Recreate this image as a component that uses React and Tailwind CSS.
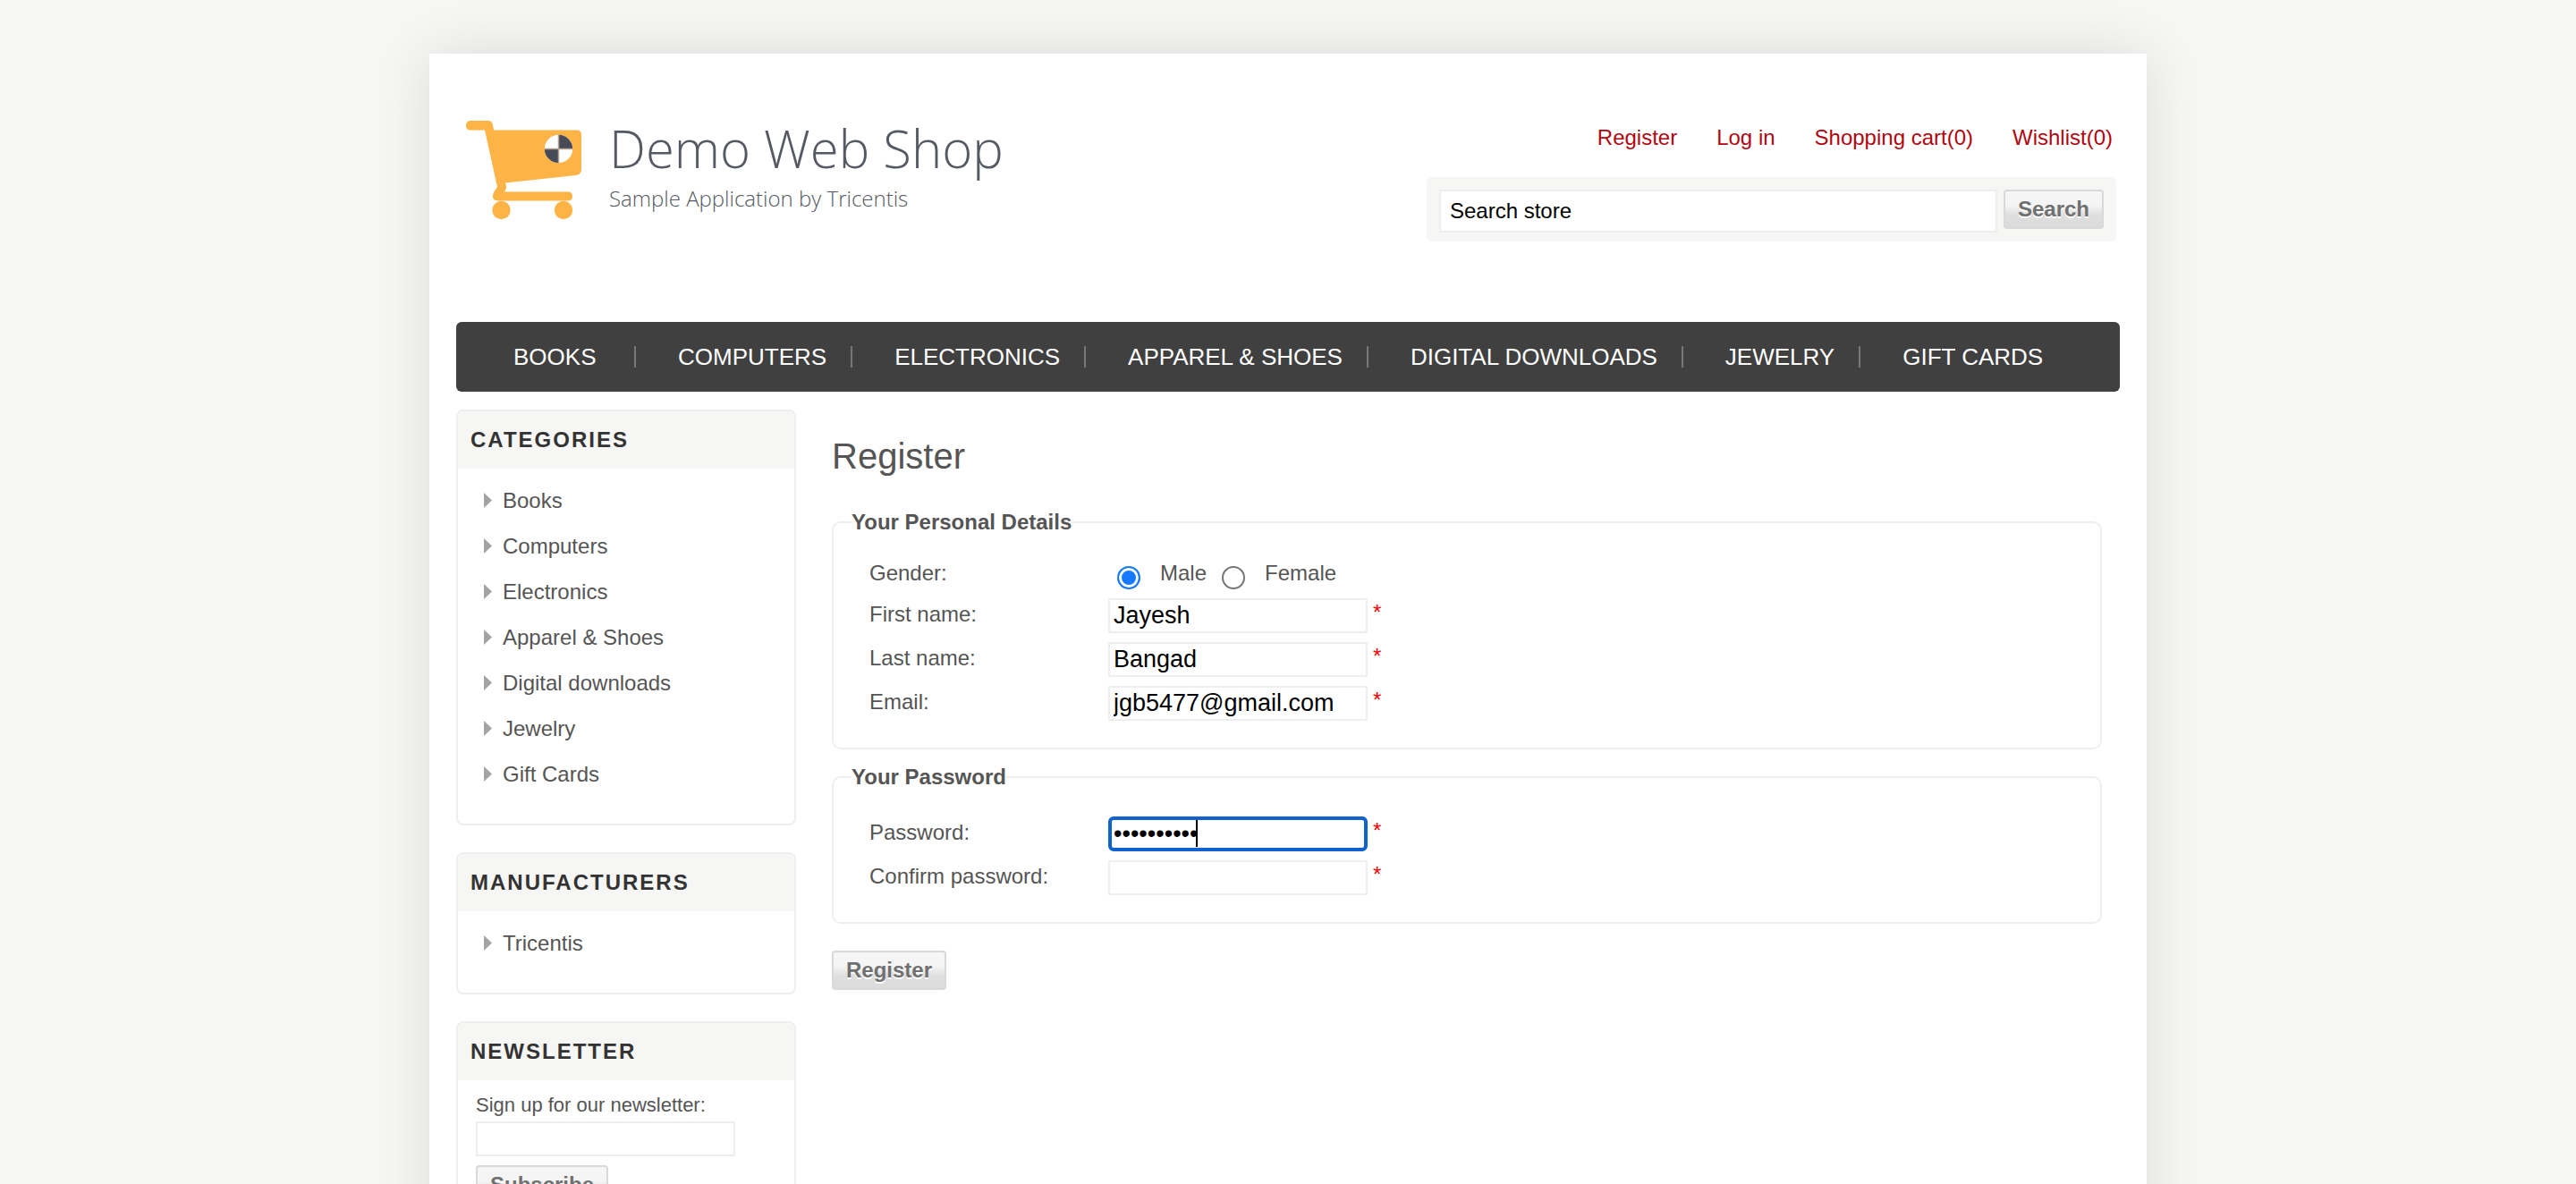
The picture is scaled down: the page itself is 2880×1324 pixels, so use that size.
import React from "react";

const headerLinks = ["Register", "Log in", "Shopping cart(0)", "Wishlist(0)"];

const menu = [
  "Books",
  "Computers",
  "Electronics",
  "Apparel & Shoes",
  "Digital downloads",
  "Jewelry",
  "Gift Cards",
];

const buttonClass =
  "h-11 shrink-0 rounded-[4px] border-2 border-[#d9d9d9] bg-[linear-gradient(#f6f6f6_0%,#f4f4f4_40%,#dedede_66%,#dcdcdc_100%)] px-3.5 text-2xl leading-8 font-bold text-[#707070] [text-shadow:0_2px_0_#fff]";

const fieldClass =
  "h-[39px] w-[290px] border-2 border-[#eee] bg-white px-1 pb-px text-[27px] leading-8 text-black outline-none";

function Logo() {
  return (
    <a href="#home" className="flex items-start pt-[75px] pl-[11px]">
      <svg viewBox="0 0 130 111" className="h-[111px] w-[130px] shrink-0" aria-hidden="true">
        <g fill="#fcb447">
          <path d="M5 0H25Q29 0 30 5L31 10.500H124Q129 10.500 129 16V54Q129 60 123 61L44 69.500Q46.500 75 43 79.500H114Q119 79.500 119 84.500Q119 89.500 114 89.500H36Q29 89.500 30 83Q31 79 35 74L21 10.500H5Q0 10.500 0 5.500Q0 0 5 0Z" />
          <circle cx="39.500" cy="100" r="10.200" />
          <circle cx="109" cy="100" r="10.200" />
        </g>
        <circle cx="103.500" cy="31.500" r="15.700" fill="#fff" />
        <path d="M103.500 31.500V15.800A15.700 15.700 0 0 1 119.200 31.500ZM103.500 31.500V47.200A15.700 15.700 0 0 1 87.800 31.500Z" fill="#464b57" />
        <path d="M87.800 31.500H119.200M103.500 15.800V47.200" stroke="#b5a38f" strokeWidth="1.500" fill="none" />
      </svg>
      <span className="ml-[30px] flex flex-col font-['Open_Sans',sans-serif]">
        <span className="text-[58px] leading-[62px] font-light text-[#555963]">Demo Web Shop</span>
        <span className="text-2xl leading-[50px] font-light text-[#555963]">
          Sample Application by Tricentis
        </span>
      </span>
    </a>
  );
}

function Header() {
  return (
    <header className="flex h-[300px] justify-between pr-1">
      <Logo />
      <div className="flex flex-col items-end pt-20">
        <nav aria-label="Account" className="flex gap-11 pr-1 text-2xl leading-7 text-[#b1060f]">
          {headerLinks.map((link) => (
            <a key={link} href="#account">
              {link}
            </a>
          ))}
        </nav>
        <form className="mt-[30px] flex h-[72px] items-start gap-[7px] rounded-md bg-[#f6f6f4] p-3.5">
          <input
            type="text"
            aria-label="Search store"
            defaultValue="Search store"
            className="h-12 w-[624px] border-2 border-[#eee] bg-white px-2.5 text-2xl text-black outline-none"
          />
          <button type="button" className={buttonClass}>
            Search
          </button>
        </form>
      </div>
    </header>
  );
}

function MainMenu() {
  return (
    <nav aria-label="Categories" className="flex h-[78px] items-center rounded-md bg-[#404040] pl-[17px]">
      {menu.map((item) => (
        <a
          key={item}
          href="#category"
          className="h-6 min-w-[184px] border-r-2 border-[#777] pr-[27px] pl-[47px] text-[26px] leading-6 text-white uppercase last:border-0"
        >
          {item}
        </a>
      ))}
    </nav>
  );
}

function Block({ title, children }) {
  return (
    <section className="rounded-lg border-2 border-[#eee]">
      <h2 className="rounded-t-lg bg-[#f6f6f4] pl-3.5 text-2xl leading-[64px] font-bold tracking-[2px] text-[#333] uppercase">
        {title}
      </h2>
      {children}
    </section>
  );
}

function LinkList({ items }) {
  return (
    <ul className="pt-2.5 pb-[30px] pl-[29px]">
      {items.map((item) => (
        <li key={item} className="flex items-center gap-3 text-2xl leading-[51px]">
          <svg viewBox="0 0 9 17" className="h-[17px] w-[9px]" aria-hidden="true">
            <path d="M0 0L9 8.500L0 17Z" fill="#a3a3a3" />
          </svg>
          <a href="#list">{item}</a>
        </li>
      ))}
    </ul>
  );
}

function Sidebar() {
  return (
    <aside className="flex w-[380px] shrink-0 flex-col gap-[30px]">
      <Block title="Categories">
        <LinkList items={menu} />
      </Block>
      <Block title="Manufacturers">
        <LinkList items={["Tricentis"]} />
      </Block>
      <Block title="Newsletter">
        <form className="flex flex-col items-start px-5 pt-3.5 pb-[30px]">
          <label htmlFor="newsletter" className="text-[22px] leading-7">
            Sign up for our newsletter:
          </label>
          <input id="newsletter" type="email" className={`${fieldClass} mt-1 mb-2.5`} />
          <button type="button" className={buttonClass}>
            Subscribe
          </button>
        </form>
      </Block>
    </aside>
  );
}

function Fieldset({ legend, children }) {
  return (
    <fieldset className="rounded-[10px] border-2 border-[#eee] px-10 pb-5">
      <legend className="-ml-5 h-7 text-2xl leading-7 font-bold">{legend}</legend>
      {children}
    </fieldset>
  );
}

function Field({ id, label, focused, ...input }) {
  return (
    <div className="flex h-[49px] items-start">
      <label htmlFor={id} className="w-[267px] shrink-0 text-2xl leading-9">
        {label}
      </label>
      <span className="relative">
        <input
          id={id}
          {...input}
          className={
            focused
              ? "block h-[39px] w-[290px] rounded-md border-4 border-[#1063cd] bg-white pl-0.5 text-[27px] leading-8 text-black outline-none"
              : `${fieldClass} block`
          }
        />
        {focused && <span className="absolute top-1 left-[98px] h-[30px] w-0.5 bg-black" />}
      </span>
      <span className="ml-1.5 text-2xl leading-8 text-[#f00]">*</span>
    </div>
  );
}

function Radio({ id, label, checked }) {
  return (
    <span className="flex items-start">
      <input
        id={id}
        type="radio"
        name="gender"
        defaultChecked={checked}
        className="mt-[7px] size-[26px] appearance-none rounded-full border-2 border-[#767676] bg-white checked:border-[#1479ff] checked:bg-[#1479ff] checked:shadow-[inset_0_0_0_3px_#fff]"
      />
      <label htmlFor={id} className="ml-[22px] text-2xl leading-[30px]">
        {label}
      </label>
    </span>
  );
}

function RegisterForm() {
  return (
    <form className="flex min-w-0 flex-1 flex-col items-stretch pt-3">
      <h1 className="mb-5 text-[40px] leading-[80px]">Register</h1>
      <Fieldset legend="Your Personal Details">
        <div className="flex h-[71px] items-start pt-[28px]">
          <span className="w-[277px] shrink-0 text-2xl leading-[30px]">Gender:</span>
          <div role="radiogroup" aria-label="Gender" className="flex gap-[17px]">
            <Radio id="male" label="Male" checked />
            <Radio id="female" label="Female" />
          </div>
        </div>
        <Field id="first" label="First name:" type="text" defaultValue="Jayesh" />
        <Field id="last" label="Last name:" type="text" defaultValue="Bangad" />
        <Field id="email" label="Email:" type="email" defaultValue="jgb5477@gmail.com" />
      </Fieldset>
      <div className="mt-[17px] mb-[30px]">
        <Fieldset legend="Your Password">
          <div className="pt-[30px]">
            <Field id="password" label="Password:" type="password" defaultValue="abcdefghij" focused />
            <Field id="confirm" label="Confirm password:" type="password" />
          </div>
        </Fieldset>
      </div>
      <button type="button" className={`${buttonClass} self-start`}>
        Register
      </button>
    </form>
  );
}

export default function App() {
  return (
    <div className="min-h-screen bg-[#f6f6f4] pt-[60px] font-['Liberation_Sans',Arial,sans-serif] text-[#555]">
      <div className="mx-auto max-w-[1920px] bg-white px-[30px] pb-[30px] shadow-[0_0_60px_rgba(0,0,0,0.11)]">
        <Header />
        <MainMenu />
        <main className="flex gap-10 pt-5 pr-5">
          <Sidebar />
          <RegisterForm />
        </main>
      </div>
    </div>
  );
}
